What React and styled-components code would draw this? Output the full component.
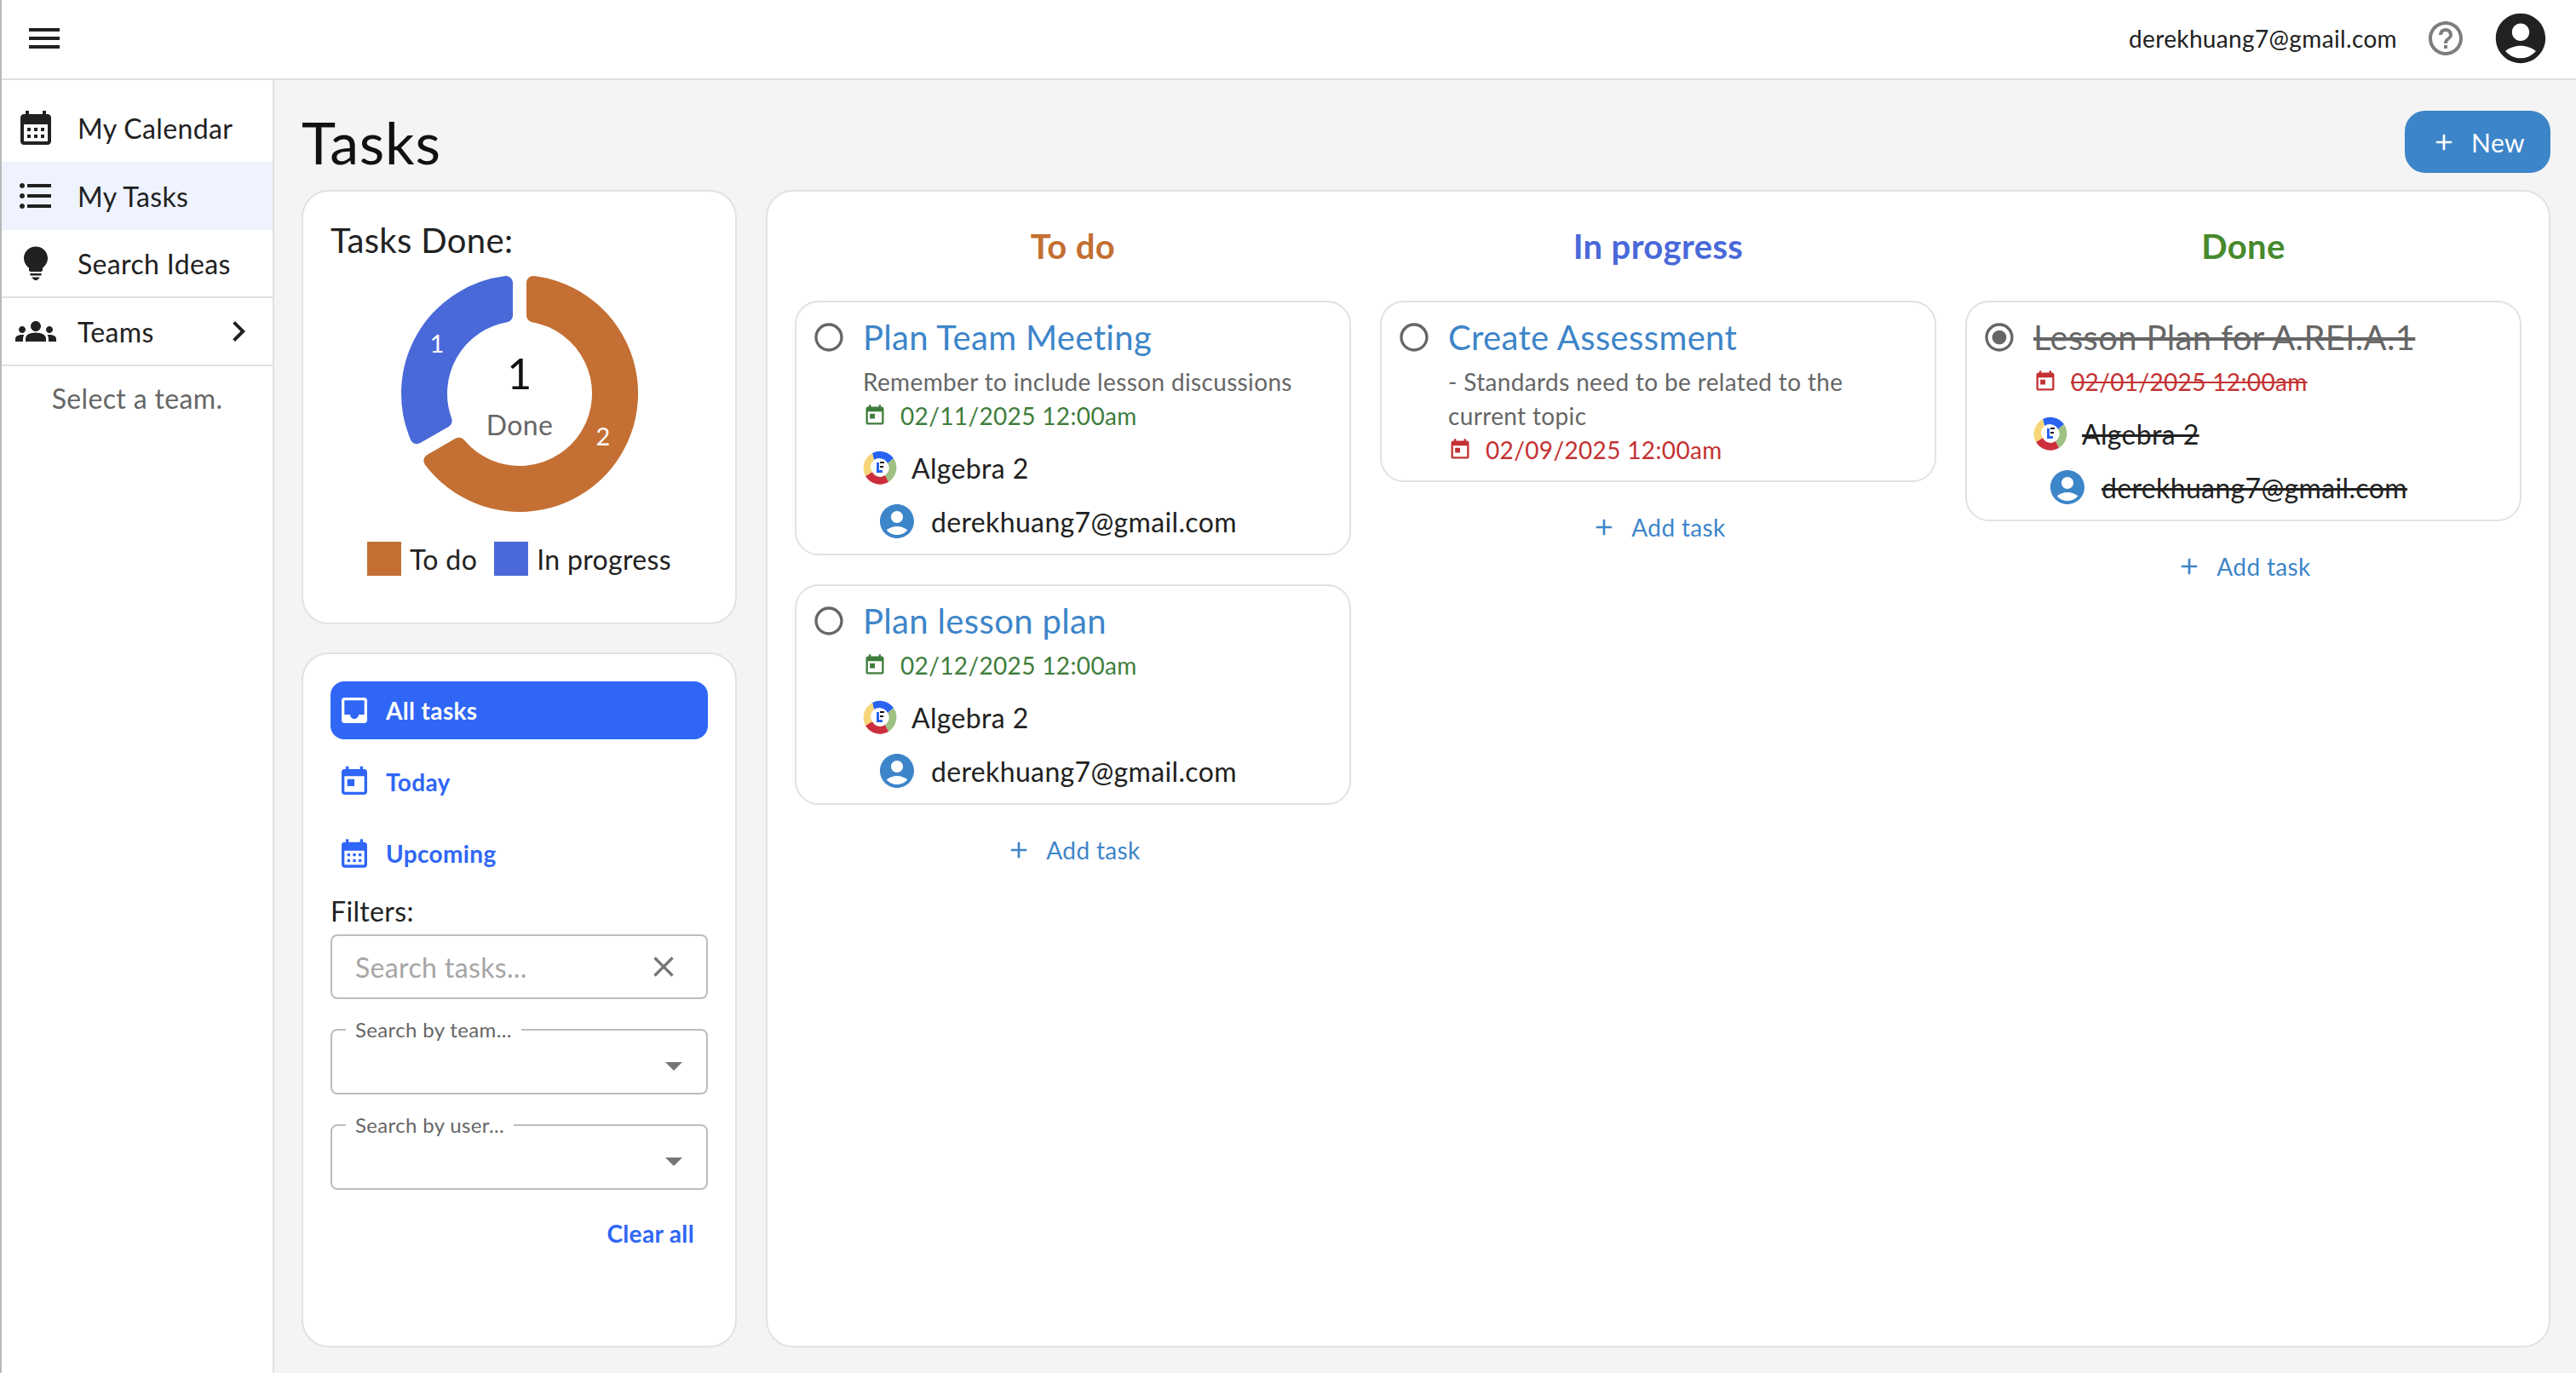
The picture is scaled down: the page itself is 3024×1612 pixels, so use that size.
import React from 'react';
import styled, { createGlobalStyle } from 'styled-components';

const Global = createGlobalStyle`
  html, body { margin: 0; padding: 0; }
  body { font-family: "Lato", "Noto Sans", sans-serif; color: #212121; background: #fff; letter-spacing: 0.022em; }
  * { box-sizing: border-box; }
`;

const P = {
  menu: 'M3 18h18v-2H3zm0-5h18v-2H3zm0-7v2h18V6z',
  calMonth: 'M19 4h-1V2h-2v2H8V2H6v2H5c-1.11 0-1.99.9-1.99 2L3 20c0 1.1.89 2 2 2h14c1.1 0 2-.9 2-2V6c0-1.1-.9-2-2-2m0 16H5V10h14zM9 14H7v-2h2zm4 0h-2v-2h2zm4 0h-2v-2h2zm-8 4H7v-2h2zm4 0h-2v-2h2zm4 0h-2v-2h2z',
  list: 'M4 10.5c-.83 0-1.5.67-1.5 1.5s.67 1.5 1.5 1.5 1.5-.67 1.5-1.5-.67-1.5-1.5-1.5m0-6c-.83 0-1.5.67-1.5 1.5S3.17 7.5 4 7.5 5.5 6.83 5.5 6 4.83 4.5 4 4.5m0 12c-.83 0-1.5.68-1.5 1.5s.68 1.5 1.5 1.5 1.5-.68 1.5-1.5-.67-1.5-1.5-1.5M7 19h14v-2H7zm0-6h14v-2H7zm0-8v2h14V5z',
  bulb: 'M12 2.2C8.1 2.2 5 5.2 5 9c0 2.4 1.2 4.5 3 5.7V16c0 .5.4 1 1 1h6c.6 0 1-.5 1-1v-1.3c1.8-1.2 3-3.3 3-5.7 0-3.8-3.1-6.8-7-6.8zM9 18h6c.5 0 .5 1.2 0 1.2H9c-.5 0-.5-1.2 0-1.2zM10 20.2h4c.4 0 .3.4 0 .7l-1.2 1c-.5.3-1.1.3-1.6 0l-1.2-1c-.3-.3-.4-.7 0-.7z',
  groups: 'M12 12.75c1.63 0 3.07.39 4.24.9 1.08.48 1.76 1.56 1.76 2.73V18H6v-1.61c0-1.18.68-2.26 1.76-2.73 1.17-.52 2.61-.91 4.24-.91M4 13c1.1 0 2-.9 2-2s-.9-2-2-2-2 .9-2 2 .9 2 2 2m1.13 1.1c-.37-.06-.74-.1-1.13-.1-.99 0-1.93.21-2.78.58C.48 14.9 0 15.62 0 16.43V18h4.5v-1.61c0-.83.23-1.61.63-2.29M20 13c1.1 0 2-.9 2-2s-.9-2-2-2-2 .9-2 2 .9 2 2 2m4 3.43c0-.81-.48-1.53-1.22-1.85-.85-.37-1.79-.58-2.78-.58-.39 0-.76.04-1.13.1.4.68.63 1.46.63 2.29V18H24zM12 6c1.66 0 3 1.34 3 3s-1.34 3-3 3-3-1.34-3-3 1.34-3 3-3',
  chevron: 'M10 6 8.59 7.41 13.17 12l-4.58 4.59L10 18l6-6z',
  help: 'M11 18h2v-2h-2zm1-16C6.48 2 2 6.48 2 12s4.48 10 10 10 10-4.48 10-10S17.52 2 12 2m0 18c-4.41 0-8-3.59-8-8s3.59-8 8-8 8 3.59 8 8-3.59 8-8 8m0-14c-2.21 0-4 1.79-4 4h2c0-1.1.9-2 2-2s2 .9 2 2c0 2-3 1.75-3 5h2c0-2.25 3-2.5 3-5 0-2.21-1.79-4-4-4',
  account: 'M12 2C6.48 2 2 6.48 2 12s4.48 10 10 10 10-4.48 10-10S17.52 2 12 2m0 4c1.93 0 3.5 1.57 3.5 3.5S13.93 13 12 13s-3.5-1.57-3.5-3.5S10.07 6 12 6m0 14c-2.03 0-4.43-.82-6.14-2.88C7.55 15.8 9.68 15 12 15s4.45.8 6.14 2.12C16.43 19.18 14.03 20 12 20',
  add: 'M18.3 13H13v5.3c0 .4-.4.7-1 .7s-1-.3-1-.7V13H5.7c-.4 0-.7-.4-.7-1s.3-1 .7-1H11V5.7c0-.4.4-.7 1-.7s1 .3 1 .7V11h5.3c.4 0 .7.4.7 1s-.3 1-.7 1z',
  inbox: 'M19 3H4.99c-1.11 0-1.98.89-1.98 2L3 19c0 1.1.88 2 1.99 2H19c1.1 0 2-.9 2-2V5c0-1.11-.9-2-2-2m0 12h-4c0 1.66-1.35 3-3 3s-3-1.34-3-3H4.99V5H19z',
  today: 'M19 3h-1V1h-2v2H8V1H6v2H5c-1.11 0-1.99.9-1.99 2L3 19c0 1.1.89 2 2 2h14c1.1 0 2-.9 2-2V5c0-1.1-.9-2-2-2m0 16H5V8h14zM7 10h5v5H7z',
  close: 'M19 6.41 17.59 5 12 10.59 6.41 5 5 6.41 10.59 12 5 17.59 6.41 19 12 13.41 17.59 19 19 17.59 13.41 12z',
  radio: 'M12 2C6.48 2 2 6.48 2 12s4.48 10 10 10 10-4.48 10-10S17.52 2 12 2m0 18c-4.42 0-8-3.58-8-8s3.58-8 8-8 8 3.58 8 8-3.58 8-8 8',
  dot: 'M12 7c-2.76 0-5 2.24-5 5s2.24 5 5 5 5-2.24 5-5-2.24-5-5-5',
};

const Svg = styled.svg`
  display: block;
  flex: none;
  fill: currentColor;
  width: ${p => p.$s}px;
  height: ${p => p.$s}px;
  color: ${p => p.$c || 'inherit'};
`;
const Icon = ({ d, s = 48, c }) => (
  <Svg viewBox="0 0 24 24" $s={s} $c={c}><path d={d} /></Svg>
);

const Page = styled.div`
  width: 3024px;
  height: 1612px;
  display: flex;
  flex-direction: column;
  border-left: 2px solid #b9b9b9;
  overflow: hidden;
  background: #fff;
`;
const Header = styled.header`
  height: 94px;
  flex: none;
  background: #fff;
  border-bottom: 2px solid #e0e0e0;
  display: flex;
  align-items: center;
  padding: 0 30px 2px 26px;
`;
const HeaderEmail = styled.span`
  margin-left: auto;
  font-size: 28px;
  color: #212121;
`;
const HelpWrap = styled.span`
  margin-left: 33px;
  color: #7d7d7d;
`;
const AvatarWrap = styled.span`
  margin-left: 29px;
  color: #212121;
`;
const Body = styled.div`
  flex: 1;
  min-height: 0;
  display: flex;
`;
const Side = styled.nav`
  width: 320px;
  flex: none;
  background: #fff;
  border-right: 2px solid #e0e0e0;
  padding-top: 16px;
`;
const NavRow = styled.div`
  height: ${p => p.$h || 80}px;
  display: flex;
  align-items: center;
  padding: 0 16px;
  gap: 25px;
  font-size: 32px;
  background: ${p => (p.$active ? '#eef3fd' : 'transparent')};
  border-bottom: ${p => (p.$line ? '2px solid #e0e0e0' : 'none')};
  color: #212121;
`;
const NavLabel = styled.span`flex: 1;`;
const SideHint = styled.div`
  text-align: center;
  color: #666;
  font-size: 32px;
  padding-top: 18px;
`;
const Main = styled.main`
  flex: 1;
  min-width: 0;
  background: #f4f4f4;
  padding: 36px 30px 30px 32px;
  display: flex;
  flex-direction: column;
`;
const TopRow = styled.div`
  display: flex;
  justify-content: space-between;
  align-items: center;
  height: 73px;
  margin-bottom: 20px;
`;
const Title = styled.h1`
  margin: 0;
  font-size: 68px;
  font-weight: 400;
  color: #111;
  letter-spacing: 0.012em;
`;
const NewButton = styled.button`
  width: 171px;
  height: 73px;
  border: 0;
  border-radius: 24px;
  background: #3d85c9;
  color: #fff;
  font: inherit;
  font-size: 30px;
  letter-spacing: inherit;
  display: flex;
  align-items: center;
  justify-content: center;
  gap: 16px;
  padding: 0;
`;
const Grid = styled.div`
  flex: 1;
  min-height: 0;
  display: grid;
  grid-template-columns: 511px 1fr;
  gap: 34px;
`;
const LeftCol = styled.div`
  display: grid;
  grid-template-rows: 510px 1fr;
  gap: 33px;
  min-height: 0;
`;
const Panel = styled.section`
  background: #fff;
  border: 2px solid #e2e2e2;
  border-radius: 32px;
  padding: ${p => p.$pad || '32px'};
  min-height: 0;
`;
const DoneTitle = styled.div`
  font-size: 40px;
  line-height: 54px;
  color: #212121;
  margin-top: -2px;
`;
const DonutBox = styled.div`
  width: 300px;
  height: 300px;
  margin: 3px auto 0;
`;
const Legend = styled.div`
  display: flex;
  align-items: center;
  justify-content: center;
  margin-top: 24px;
  padding-left: 0;
  font-size: 32px;
`;
const Swatch = styled.i`
  width: 40px;
  height: 40px;
  background: ${p => p.$c};
  margin-right: 10px;
  margin-left: ${p => p.$ml || 0}px;
`;
const FilterTab = styled.div`
  height: 68px;
  margin-bottom: 16px;
  border-radius: 16px;
  display: flex;
  align-items: center;
  padding-left: 8px;
  gap: 17px;
  font-size: 28px;
  font-weight: 700;
  color: ${p => (p.$active ? '#fff' : '#2f66f6')};
  background: ${p => (p.$active ? '#2f66f6' : 'transparent')};
`;
const FiltersLabel = styled.div`
  font-size: 32px;
  line-height: 40px;
  margin-top: -2px;
  margin-bottom: 7px;
`;
const SearchBox = styled.div`
  height: 76px;
  border: 2px solid #bdbdbd;
  border-radius: 8px;
  display: flex;
  align-items: center;
  justify-content: space-between;
  padding: 0 30px 0 27px;
  font-size: 32px;
  color: #a6a6a6;
`;
const SelectBox = styled.fieldset`
  position: relative;
  margin: 24px 0 0;
  height: 88px;
  padding: 0 0 0 16px;
  border: 2px solid #bdbdbd;
  border-radius: 8px;
  display: block;
`;
const SelectLegend = styled.legend`
  padding: 0 11px;
  font-size: 24px;
  line-height: 24px;
  color: #666;
`;
const Arrow = styled.span`
  position: absolute;
  right: 28px;
  top: 26px;
  width: 0;
  height: 0;
  border-left: 10px solid transparent;
  border-right: 10px solid transparent;
  border-top: 10px solid #757575;
`;
const ClearAll = styled.div`
  text-align: right;
  padding-right: 16px;
  margin-top: 34px;
  font-size: 28px;
  font-weight: 700;
  color: #2f66f6;
`;
const Board = styled.section`
  background: #fff;
  border: 2px solid #e2e2e2;
  border-radius: 32px;
  padding: 0 32px;
  display: grid;
  grid-template-columns: repeat(3, 1fr);
  column-gap: 34px;
  align-items: start;
`;
const Column = styled.div`
  display: flex;
  flex-direction: column;
`;
const ColumnHead = styled.h2`
  margin: 0;
  height: 128px;
  display: flex;
  align-items: center;
  justify-content: center;
  padding-bottom: 0;
  font-size: 40px;
  font-weight: 700;
  color: ${p => p.$c};
`;
const Card = styled.article`
  background: #fff;
  border: 2px solid #e2e2e2;
  border-radius: 28px;
  padding: 16px 20px 16px 20px;
  margin-bottom: 34px;
  display: grid;
  grid-template-columns: 58px 1fr;
  &:last-of-type { margin-bottom: 0; }
`;
const RadioCell = styled.div`
  padding-top: 5px;
  margin-left: -2px;
  color: #666;
`;
const CardBody = styled.div`
  min-width: 0;
  padding-left: 0;
  color: #212121;
`;
const CardTitle = styled.div`
  font-size: 40px;
  line-height: 50px;
  margin-bottom: 7px;
  color: ${p => (p.$done ? '#666' : '#3d85c9')};
  text-decoration: ${p => (p.$done ? 'line-through' : 'none')};
`;
const CardDesc = styled.div`
  font-size: 28px;
  line-height: 40px;
  color: #666;
`;
const DateRow = styled.div`
  display: flex;
  align-items: center;
  height: 40px;
  gap: 16px;
  font-size: 28px;
  padding-left: 0;
  color: ${p => (p.$late ? '#c43232' : '#3f7d3c')};
  text-decoration: ${p => (p.$done ? 'line-through' : 'none')};
`;
const TeamRow = styled.div`
  display: flex;
  align-items: center;
  height: 40px;
  margin-top: 21px;
  gap: 17px;
  font-size: 32px;
  text-decoration: ${p => (p.$done ? 'line-through' : 'none')};
`;
const UserRow = styled.div`
  display: flex;
  align-items: center;
  height: 44px;
  margin-top: 21px;
  padding-left: 20px;
  gap: 20px;
  font-size: 32px;
  text-decoration: ${p => (p.$done ? 'line-through' : 'none')};
`;
const UserAvatar = styled.span`
  width: 40px;
  height: 40px;
  flex: none;
  color: #3d85c9;
  display: flex;
  align-items: center;
  justify-content: center;
`;
const AddTask = styled.div`
  display: flex;
  align-items: center;
  justify-content: center;
  gap: 16px;
  height: 40px;
  margin-top: 33px;
  font-size: 28px;
  color: #3d85c9;
`;

const Logo = () => (
  <svg width="40" height="40" viewBox="0 0 40 40" style={{ display: 'block', flex: 'none' }}>
    <path d="M11 3 A20 20 0 0 1 36 9 L29 15 A11 11 0 0 0 13 11 Z" fill="#2a62f2" />
    <path d="M36 9 A20 20 0 0 1 30 37 L26 29 A10 10 0 0 0 29 15 Z" fill="#9fc183" />
    <path d="M30 37 A20 20 0 0 1 3 30 L11 25 A10 10 0 0 0 26 29 Z" fill="#cc2e3c" />
    <path d="M3 30 A20 20 0 0 1 11 3 L13 11 A10 10 0 0 0 11 25 Z" fill="#f6d678" />
    <circle cx="20" cy="20" r="10" fill="#fff" />
    <path d="M16 14h3v9h4v3h-7z" fill="#2a62f2" />
    <path d="M20 13h5v2h-5zM20 18h4v2h-4z" fill="#111" />
  </svg>
);

const polar = (cx, cy, rad, deg) => {
  const a = (deg * Math.PI) / 180;
  return [cx + rad * Math.sin(a), cy - rad * Math.cos(a)];
};
const sector = (cx, cy, R, r, a0, a1, gap, corner) => {
  const Ro = R - corner;
  const ri = r + corner;
  const off = gap + corner;
  const dOut = (Math.asin(off / Ro) * 180) / Math.PI;
  const dIn = (Math.asin(off / ri) * 180) / Math.PI;
  const [x1, y1] = polar(cx, cy, Ro, a0 + dOut);
  const [x2, y2] = polar(cx, cy, Ro, a1 - dOut);
  const [x3, y3] = polar(cx, cy, ri, a1 - dIn);
  const [x4, y4] = polar(cx, cy, ri, a0 + dIn);
  const large = a1 - a0 > 180 ? 1 : 0;
  return `M${x1} ${y1}A${Ro} ${Ro} 0 ${large} 1 ${x2} ${y2}L${x3} ${y3}A${ri} ${ri} 0 ${large} 0 ${x4} ${y4}Z`;
};
const Donut = () => (
  <svg width="300" height="300" viewBox="0 0 300 300" style={{ display: 'block' }}>
    <path d={sector(150, 150, 139, 85, 0, 240, 8, 8)} fill="#c46f33" stroke="#c46f33" strokeWidth="16" strokeLinejoin="round" />
    <path d={sector(150, 150, 139, 85, 240, 360, 8, 8)} fill="#4a69d9" stroke="#4a69d9" strokeWidth="16" strokeLinejoin="round" />
    <text x="53" y="102" textAnchor="middle" fontSize="29" fill="#fff">1</text>
    <text x="248" y="211" textAnchor="middle" fontSize="29" fill="#fff">2</text>
    <text x="150" y="145" textAnchor="middle" fontSize="50" fill="#111">1</text>
    <text x="150" y="199" textAnchor="middle" fontSize="32" fill="#666">Done</text>
  </svg>
);

const Task = ({ title, desc, date, late, done }) => (
  <Card>
    <RadioCell>
      <Svg viewBox="0 0 24 24" $s={40}>
        <path d={P.radio} />
        {done && <path d={P.dot} />}
      </Svg>
    </RadioCell>
    <CardBody>
      <CardTitle $done={done}>{title}</CardTitle>
      {desc && <CardDesc>{desc}</CardDesc>}
      <DateRow $late={late} $done={done}>
        <Icon d={P.today} s={28} />
        <span>{date}</span>
      </DateRow>
      <TeamRow $done={done}>
        <Logo />
        <span>Algebra 2</span>
      </TeamRow>
      <UserRow $done={done}>
        <UserAvatar><Icon d={P.account} s={48} /></UserAvatar>
        <span>derekhuang7@gmail.com</span>
      </UserRow>
    </CardBody>
  </Card>
);

const Add = () => (
  <AddTask>
    <Icon d={P.add} s={32} />
    <span>Add task</span>
  </AddTask>
);

export default function App() {
  return (
    <Page>
      <Global />
      <Header>
        <Icon d={P.menu} />
        <HeaderEmail>derekhuang7@gmail.com</HeaderEmail>
        <HelpWrap><Icon d={P.help} /></HelpWrap>
        <AvatarWrap><Icon d={P.account} s={70} /></AvatarWrap>
      </Header>
      <Body>
        <Side>
          <NavRow><Icon d={P.calMonth} /><NavLabel>My Calendar</NavLabel></NavRow>
          <NavRow $active><Icon d={P.list} /><NavLabel>My Tasks</NavLabel></NavRow>
          <NavRow $line><Icon d={P.bulb} /><NavLabel>Search Ideas</NavLabel></NavRow>
          <NavRow $line><Icon d={P.groups} /><NavLabel>Teams</NavLabel><Icon d={P.chevron} /></NavRow>
          <SideHint>Select a team.</SideHint>
        </Side>
        <Main>
          <TopRow>
            <Title>Tasks</Title>
            <NewButton><Icon d={P.add} s={32} /><span>New</span></NewButton>
          </TopRow>
          <Grid>
            <LeftCol>
              <Panel>
                <DoneTitle>Tasks Done:</DoneTitle>
                <DonutBox><Donut /></DonutBox>
                <Legend>
                  <Swatch $c="#c46f33" /><span>To do</span>
                  <Swatch $c="#4a69d9" $ml={20} /><span>In progress</span>
                </Legend>
              </Panel>
              <Panel>
                <FilterTab $active><Icon d={P.inbox} s={40} /><span>All tasks</span></FilterTab>
                <FilterTab><Icon d={P.today} s={40} /><span>Today</span></FilterTab>
                <FilterTab><Icon d={P.calMonth} s={40} /><span>Upcoming</span></FilterTab>
                <FiltersLabel>Filters:</FiltersLabel>
                <SearchBox>
                  <span>Search tasks...</span>
                  <Icon d={P.close} s={40} c="#757575" />
                </SearchBox>
                <SelectBox>
                  <SelectLegend>Search by team...</SelectLegend>
                  <Arrow />
                </SelectBox>
                <SelectBox>
                  <SelectLegend>Search by user...</SelectLegend>
                  <Arrow />
                </SelectBox>
                <ClearAll>Clear all</ClearAll>
              </Panel>
            </LeftCol>
            <Board>
              <Column>
                <ColumnHead $c="#c46f33">To do</ColumnHead>
                <Task title="Plan Team Meeting" desc="Remember to include lesson discussions" date="02/11/2025 12:00am" />
                <Task title="Plan lesson plan" date="02/12/2025 12:00am" />
                <Add />
              </Column>
              <Column>
                <ColumnHead $c="#4a69d9">In progress</ColumnHead>
                <CompactTask />
                <Add />
              </Column>
              <Column>
                <ColumnHead $c="#478a2e">Done</ColumnHead>
                <Task title="Lesson Plan for A.REI.A.1" date="02/01/2025 12:00am" late done />
                <Add />
              </Column>
            </Board>
          </Grid>
        </Main>
      </Body>
    </Page>
  );
}

function CompactTask() {
  return (
    <Card>
      <RadioCell>
        <Svg viewBox="0 0 24 24" $s={40}><path d={P.radio} /></Svg>
      </RadioCell>
      <CardBody>
        <CardTitle>Create Assessment</CardTitle>
        <CardDesc>- Standards need to be related to the current topic</CardDesc>
        <DateRow $late>
          <Icon d={P.today} s={28} />
          <span>02/09/2025 12:00am</span>
        </DateRow>
      </CardBody>
    </Card>
  );
}
